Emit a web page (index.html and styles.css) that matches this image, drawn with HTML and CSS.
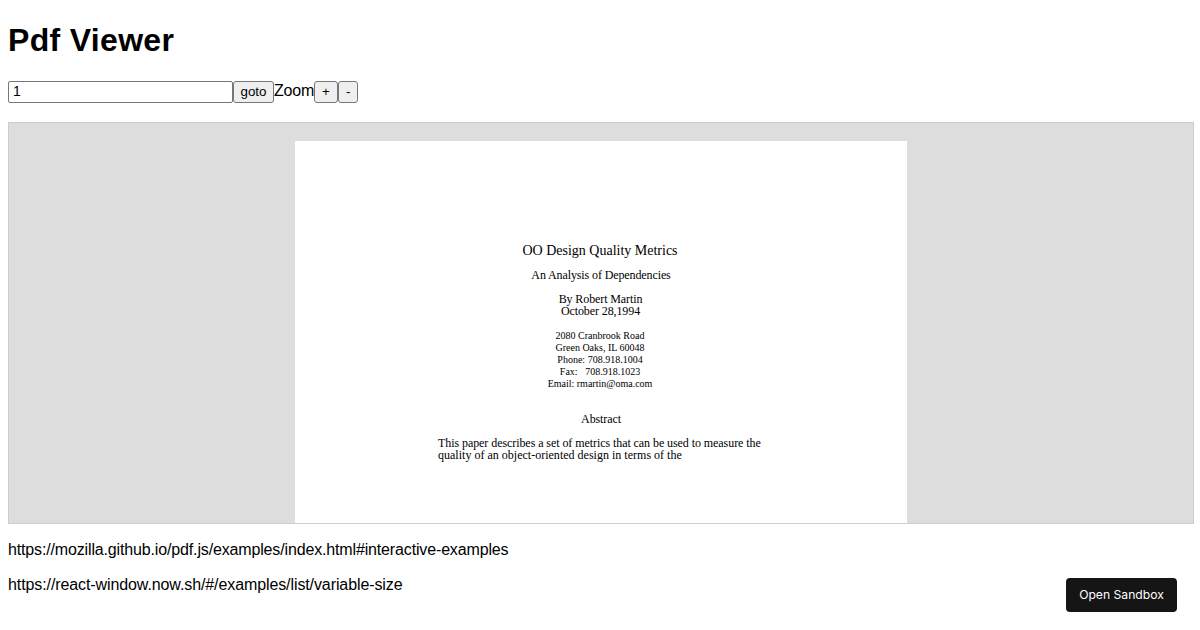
FILE: index.html
```html
<!DOCTYPE html>
<html lang="en">
<head>
<meta charset="utf-8">
<title>Pdf Viewer</title>
<link rel="stylesheet" href="styles.css">
</head>
<body>
<h1 class="title">Pdf Viewer</h1>
<div class="toolbar">
  <input class="page-input" type="text" value="1"><button class="btn btn-goto">goto</button><span class="zoom-label">Zoom</span><button class="btn btn-small">+</button><button class="btn btn-small">-</button>
</div>
<div class="viewer">
  <div class="page">
    <div class="doc-title">OO Design Quality Metrics</div>
    <div class="doc-sub">An Analysis of Dependencies</div>
    <div class="doc-author">By Robert Martin<br>October 28,1994</div>
    <div class="doc-address">2080 Cranbrook Road<br>Green Oaks, IL 60048<br>Phone: 708.918.1004<br>Fax:&nbsp;&nbsp; 708.918.1023<br>Email: rmartin@oma.com</div>
    <div class="doc-abstract">Abstract</div>
    <div class="doc-body">This paper describes a set of metrics that can be used to measure the<br><span class="doc-body-wide">quality of an object-oriented design in terms of the</span></div>
  </div>
</div>
<p class="link-line">https://mozilla.github.io/pdf.js/examples/index.html#interactive-examples</p>
<p class="link-line">https://react-window.now.sh/#/examples/list/variable-size</p>
<a class="sandbox">Open Sandbox</a>
</body>
</html>
```
FILE: styles.css
```css
html, body { margin: 0; padding: 0; background: #fff; overflow: hidden; }
body { padding: 8px; font-family: "Liberation Sans", Arial, sans-serif; font-size: 16px; color: #000; width: 1202px; height: 630px; box-sizing: border-box; }
.title { font-size: 32px; line-height: 40px; margin: 12px 0 21px; font-weight: 700; letter-spacing: 0.32px; }
.toolbar { display: flex; align-items: flex-start; height: 22px; margin-bottom: 19px; }
.page-input { width: 225px; height: 22px; box-sizing: border-box; border: 1px solid #767676; border-radius: 2px; padding: 0 4px 2px; font: 14px "Liberation Sans", Arial, sans-serif; margin: 0; color: #000; }
.btn { height: 22px; box-sizing: border-box; border: 1px solid #767676; border-radius: 3px; background: #efefef; font: 13.33px "Liberation Sans", Arial, sans-serif; padding: 0 7px 1px; margin: 0; color: #000; }
.btn-goto { width: 41px; padding: 0 0 1px; }
.zoom-label { line-height: 20px; letter-spacing: -0.2px; }
.viewer { height: 402px; box-sizing: border-box; border: 1px solid #ccc; background: #ddd; display: flex; justify-content: center; padding-top: 18px; overflow: hidden; }
.page { width: 612px; height: 382px; background: #fff; font-family: "Liberation Serif", "Times New Roman", serif; text-align: center; flex: none; padding-top: 101px; box-sizing: border-box; }
.doc-title { font-size: 14px; line-height: 18px; margin-right: 2px; }
.doc-sub { font-size: 12px; line-height: 14px; margin-top: 8px; letter-spacing: -0.11px; }
.doc-author { font-size: 12px; line-height: 12px; margin-top: 11px; margin-right: 1px; letter-spacing: -0.1px; }
.doc-address { font-size: 10px; line-height: 12px; margin-top: 13px; margin-right: 2px; }
.doc-abstract { font-size: 12px; line-height: 14px; margin-top: 22px; letter-spacing: -0.1px; }
.doc-body { font-size: 12px; line-height: 12px; margin-top: 11px; margin-left: 143px; text-align: left; white-space: nowrap; letter-spacing: -0.07px; }
.doc-body-wide { letter-spacing: 0.01px; }
.link-line { margin: 17px 0 0; line-height: 18px; letter-spacing: -0.15px; }
.link-line + .link-line { margin-top: 17px; letter-spacing: -0.1px; }
.sandbox { position: absolute; left: 1066px; top: 578px; width: 111px; height: 34px; box-sizing: border-box; background: #151515; border-radius: 4px; color: #fff; font: 12.15px/34px Inter, sans-serif; text-align: center; }
```
